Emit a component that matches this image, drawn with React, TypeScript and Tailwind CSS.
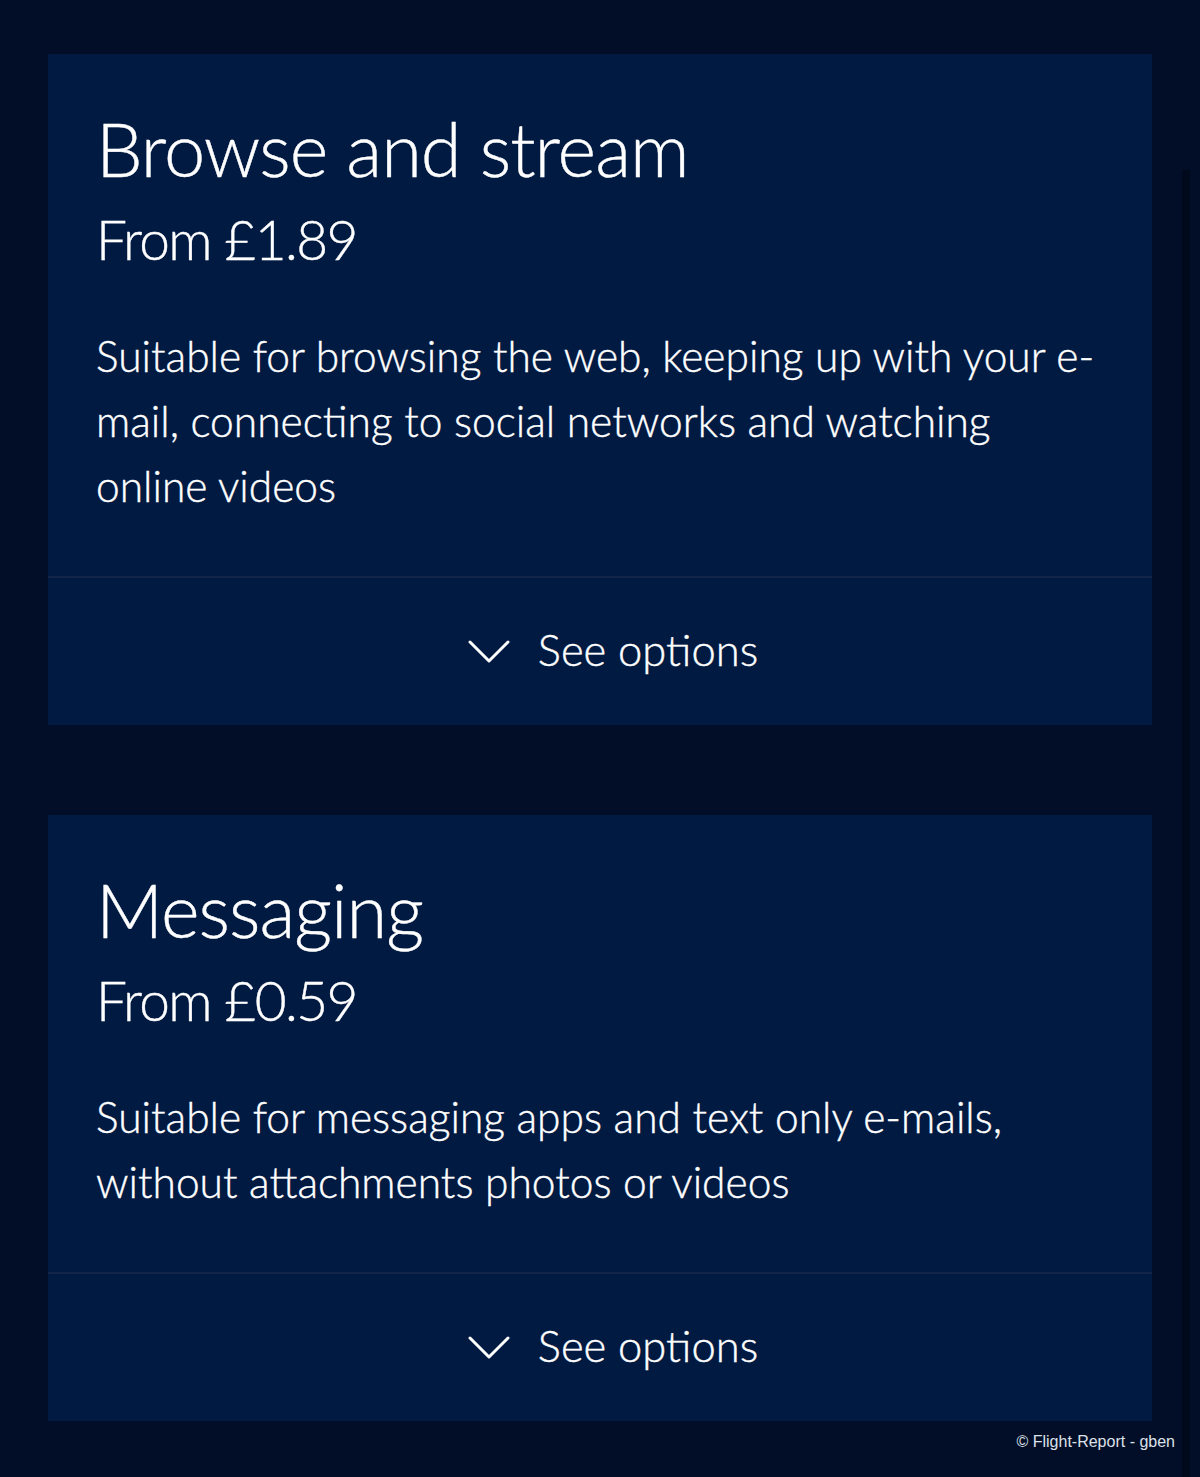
type Plan = {
  title: string;
  price: string;
  text: string;
};

const plans: Plan[] = [
  {
    title: "Browse and stream",
    price: "From £1.89",
    text: "Suitable for browsing the web, keeping up with your e-mail, connecting to social networks and watching online videos",
  },
  {
    title: "Messaging",
    price: "From £0.59",
    text: "Suitable for messaging apps and text only e-mails, without attachments photos or videos",
  },
];

const Chevron = () => (
  <svg width="42" height="26" viewBox="0 0 42 26" fill="none" className="shrink-0">
    <path d="M2 3 L21 22 L40 3" stroke="white" strokeWidth="3" strokeLinecap="round" strokeLinejoin="round" />
  </svg>
);

const PlanCard = ({ plan }: { plan: Plan }) => {
  return (
    <div className="bg-[#011a42] flex flex-col [-webkit-text-stroke:0.4px_#fff]">
      <div className="px-12 pt-[56px] pb-[58px] flex flex-col">
        <h2 className="text-[74px] leading-[78px] tracking-[-1px] font-light">{plan.title}</h2>
        <p className="text-[55px] leading-[58px] tracking-[-1.6px] mt-[22px] font-light">{plan.price}</p>
        <p className="text-[42.5px] leading-[65px] mt-[55px] font-light">{plan.text}</p>
      </div>
      <div className="h-[2px] bg-[#13264a]" />
      <button className="h-[147px] flex items-center justify-center gap-[28px] pl-[26px] text-[43.5px] font-light">
        <Chevron />
        <span className="mt-[-4px]">See options</span>
      </button>
    </div>
  );
};

export default function App() {
  return (
    <div
      className="relative min-h-[1477px] w-[1200px] bg-[#020e27] text-white pt-[54px] px-12 flex flex-col gap-[90px]"
      style={{ fontFamily: "Lato, 'Noto Sans', sans-serif" }}
    >
      {plans.map((p) => (
        <PlanCard key={p.title} plan={p} />
      ))}
      <div className="absolute right-[10px] top-[170px] bottom-0 w-[8px] bg-[#010a1d]" />
      <p
        className="absolute right-[25px] bottom-[23px] text-[16px] text-[#dde1e9]"
        style={{ fontFamily: "'Liberation Sans', Arial, sans-serif" }}
      >
        © Flight-Report - gben
      </p>
    </div>
  );
}
